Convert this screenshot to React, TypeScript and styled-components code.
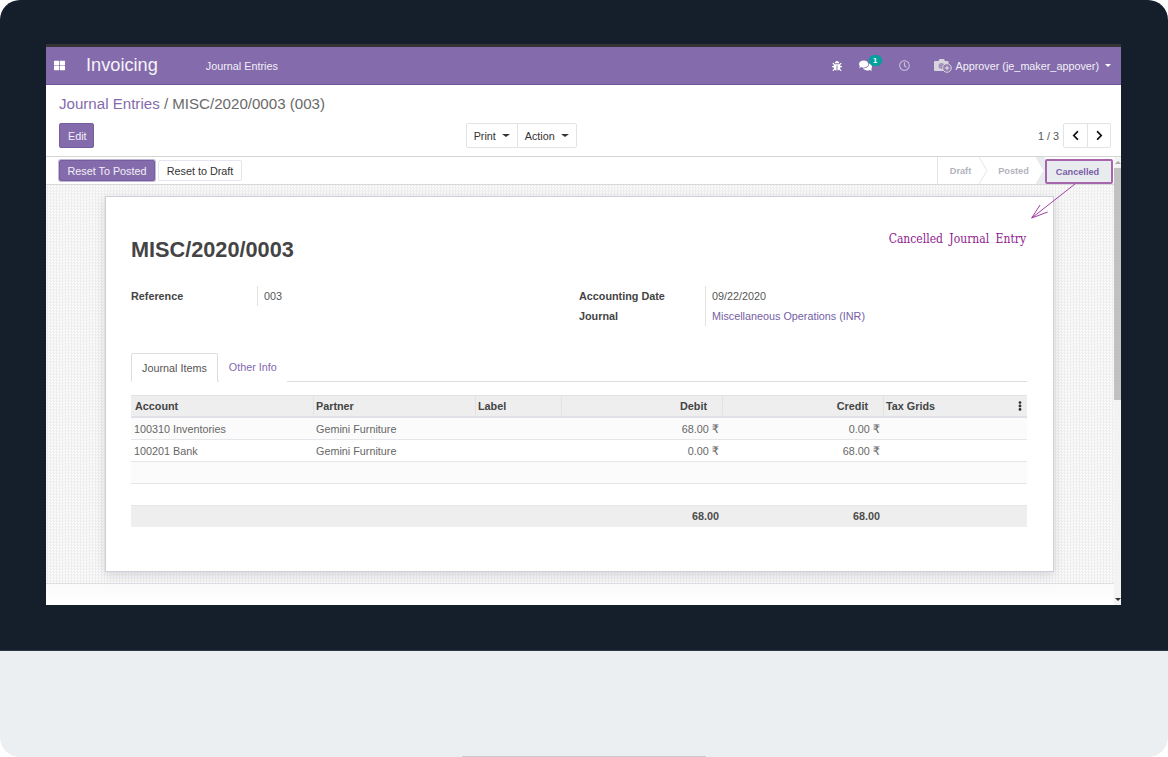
import React from "react";
import styled, { createGlobalStyle } from "styled-components";
import {
  FaBug,
  FaChevronLeft,
  FaChevronRight,
  FaComments,
  FaEllipsisV,
  FaRegClock,
  FaThLarge,
} from "react-icons/fa";

const purple = "#846bab";
const text = "#4c4c4c";

const GlobalStyle = createGlobalStyle`
  html, body { margin: 0; padding: 0; background: #fff; }
  body { font-family: "Liberation Sans", Arial, sans-serif; font-size: 10.8px; color: ${text}; }
  * { box-sizing: border-box; }
`;

const Page = styled.div`
  position: relative;
  width: 1168px;
  height: 757px;
  overflow: hidden;
  border-radius: 20px;
  background: #eceff1;
`;

const Bezel = styled.div`
  height: 651px;
  padding: 44px 47px 0 46px;
  background: #141f2b;
  border-bottom: 1px solid #2a3844;
`;

const Screen = styled.div`
  display: flex;
  flex-direction: column;
  width: 1075px;
  height: 561px;
  background: #fff;
  border-top: 3px solid #343434;
  overflow: hidden;
`;

const NavBar = styled.header`
  flex: none;
  display: flex;
  align-items: center;
  height: 38px;
  padding: 0 22px 0 8px;
  background: ${purple};
  border-bottom: 1px solid #6e559a;
  color: #fff;
`;

const Brand = styled.span`
  margin-left: 21px;
  font-size: 18.2px;
  color: #f6f3fa;
`;

const NavLink = styled.span`
  margin-left: 48px;
  color: #f3eff8;
`;

const NavRight = styled.div`
  display: flex;
  align-items: center;
  margin-left: auto;
  margin-right: -12px;
`;

const NavIcon = styled.span<{ $gap: number; $faded?: boolean }>`
  position: relative;
  display: inline-flex;
  margin-left: ${({ $gap }) => $gap}px;
  color: ${({ $faded }) => ($faded ? "#c9bedb" : "#fff")};
`;

const Badge = styled.span`
  position: absolute;
  top: -4px;
  left: 10px;
  width: 13px;
  height: 11px;
  border-radius: 6px;
  background: #00a09d;
  color: #fff;
  font-size: 7.5px;
  font-weight: 700;
  line-height: 11px;
  text-align: center;
`;

const AvatarIcon = styled.svg`
  margin-left: 24px;
`;

const UserName = styled.span`
  margin-left: 4px;
  color: #f3eff8;
`;

const Caret = styled.span<{ $size?: number }>`
  display: inline-block;
  margin-left: 6px;
  border-top: 3.5px solid currentColor;
  border-left: ${({ $size }) => $size ?? 3.5}px solid transparent;
  border-right: ${({ $size }) => $size ?? 3.5}px solid transparent;
  vertical-align: 2px;
`;

const ControlPanel = styled.section`
  flex: none;
  height: 72px;
  padding: 10px 10px 0 13px;
  border-bottom: 1px solid #d5d5d5;
`;

const Breadcrumb = styled.div`
  height: 18px;
  font-size: 15.1px;
  line-height: 18px;
  color: #6a6a6a;
  white-space: nowrap;
`;

const CrumbLink = styled.span`
  color: ${purple};
`;

const ButtonRow = styled.div`
  display: grid;
  grid-template-columns: 407px 111px 1fr;
  align-items: center;
  margin-top: 10px;
`;

const PrimaryButton = styled.button`
  height: 25px;
  padding: 0 8px;
  border: 1px solid #775ea0;
  border-radius: 2px;
  background: ${purple};
  color: #f3eff8;
  font: 10.8px "Liberation Sans", Arial, sans-serif;
`;

const EditButton = styled(PrimaryButton)`
  justify-self: start;
  width: 35px;
`;

const Group = styled.div`
  display: flex;
  height: 25px;
  border: 1px solid #e3e3e3;
  border-radius: 2px;
  background: #fff;
`;

const GroupItem = styled.span<{ $width: number }>`
  display: flex;
  align-items: center;
  justify-content: center;
  width: ${({ $width }) => $width}px;
  color: #333;
  & + & {
    border-left: 1px solid #e3e3e3;
  }
`;

const Pager = styled.div`
  display: flex;
  align-items: center;
  justify-content: flex-end;
  gap: 4px;
  color: #555;
`;

const Body = styled.div`
  flex: 1;
  display: flex;
  min-height: 0;
`;

const MainColumn = styled.main`
  flex: 1;
  display: flex;
  flex-direction: column;
  min-width: 0;
`;

const StatusBar = styled.div`
  flex: none;
  display: flex;
  align-items: center;
  justify-content: space-between;
  height: 28px;
  padding-left: 13px;
  border-bottom: 1px solid #d8d8d8;
`;

const Actions = styled.div`
  display: flex;
  gap: 3px;
`;

const ResetPosted = styled(PrimaryButton)`
  width: 96px;
  height: 21px;
  padding: 0;
  box-shadow: 0 0 0 1px #c4b8d8;
`;

const ResetDraft = styled.button`
  width: 84px;
  height: 21px;
  padding: 0;
  border: 1px solid #e3e6ee;
  border-radius: 2px;
  background: #fff;
  color: #333;
  font: 10.8px "Liberation Sans", Arial, sans-serif;
`;

const Stages = styled.div`
  display: flex;
  align-self: stretch;
  height: 27px;
  border-left: 1px solid #e5e5e5;
`;

const Stage = styled.span<{ $width: number; $shift?: number; $current?: boolean }>`
  position: relative;
  display: flex;
  align-items: center;
  justify-content: center;
  width: ${({ $width }) => $width}px;
  padding-left: ${({ $shift }) => $shift ?? 0}px;
  color: ${({ $current }) => ($current ? "#7a5ea8" : "#b3b3bd")};
  background: ${({ $current }) => ($current ? "#e9ecef" : "transparent")};
  font-size: 9.2px;
  font-weight: 700;
`;

const StageArrow = styled.svg`
  position: absolute;
  top: 0;
  left: 100%;
  width: 9px;
  height: 27px;
  z-index: 1;
`;

const CurrentStage = styled(Stage)`
  height: 25px;
  margin: 2px 1px 0 9px;
  padding-right: 3px;
  border: 2px solid #a765ad;
  border-radius: 2px;
`;

const SheetBackground = styled.div`
  flex: 1;
  min-height: 0;
  padding: 11px 60px 0 59px;
  background-color: #f3f3f3;
  background-image: repeating-conic-gradient(#eeeeee 0 25%, #fbfbfb 0 50%);
  background-size: 3px 3px;
  border-bottom: 1px solid #dedee3;
`;

const Sheet = styled.article`
  position: relative;
  height: 376px;
  padding: 37px 26px 0 25px;
  background: #fff;
  border: 1px solid #cfcfd8;
  box-shadow: 0 3px 10px rgba(90, 90, 120, 0.2);
`;

const Remark = styled.span`
  position: absolute;
  top: 35px;
  right: 27px;
  color: #8e1a8e;
  font-family: "DejaVu Serif", serif;
  font-stretch: condensed;
  font-size: 12px;
  word-spacing: 3px;
`;

const Title = styled.h1`
  margin: 0;
  height: 31px;
  font-size: 21.7px;
  line-height: 31px;
  font-weight: 700;
  color: #444;
`;

const FieldColumns = styled.div`
  display: grid;
  grid-template-columns: 448px 1fr;
  margin-top: 21px;
`;

const FieldGroup = styled.div`
  display: grid;
  grid-template-columns: 126px 1fr;
  grid-auto-rows: 20px;
`;

const FieldLabel = styled.span`
  font-weight: 700;
  color: #444;
  line-height: 20px;
`;

const FieldValue = styled.span<{ $link?: boolean }>`
  padding-left: 6px;
  border-left: 1px solid #e3e3e3;
  line-height: 20px;
  color: ${({ $link }) => ($link ? "#7460a4" : "#555")};
`;

const Tabs = styled.nav`
  display: flex;
  height: 29px;
  margin-top: 27px;
  border-bottom: 1px solid #ddd;
`;

const Tab = styled.span<{ $active?: boolean }>`
  height: 29px;
  padding: 0 10px;
  line-height: 28px;
  color: ${({ $active }) => ($active ? "#555" : "#8368b2")};
  background: #fff;
  ${({ $active }) =>
    $active
      ? "border: 1px solid #ddd; border-bottom-color: #fff; border-radius: 2px 2px 0 0;"
      : "margin-left: 1px;"}
`;

const Table = styled.div`
  margin-top: 13px;
`;

const COLUMNS = "182px 162px 86px 161px 161px 144px";

const HeadRow = styled.div`
  display: grid;
  grid-template-columns: ${COLUMNS};
  height: 23px;
  padding-bottom: 1px;
  background: #eee;
  border-top: 1px solid #e2e2e2;
  border-bottom: 2px solid #dfe1e6;
`;

const HeadCell = styled.span<{ $right?: boolean }>`
  display: flex;
  align-items: center;
  justify-content: ${({ $right }) => ($right ? "flex-end" : "space-between")};
  padding: 0 ${({ $right }) => ($right ? "15px" : "3px")} 0 2px;
  border-left: 1px solid #e2e2e2;
  font-weight: 700;
  color: #444;
  &:first-child {
    padding-left: 4px;
    border-left: 0;
  }
`;

const MoreIcon = styled(FaEllipsisV)`
  margin-right: -1px;
  font-size: 10px;
  color: #333;
`;

const Row = styled.div<{ $striped?: boolean }>`
  display: grid;
  grid-template-columns: ${COLUMNS};
  height: 22px;
  padding-top: 1px;
  align-items: center;
  background: ${({ $striped }) => ($striped ? "#fbfbfb" : "#fff")};
  border-bottom: 1px solid #e6e6ea;
`;

const Cell = styled.span<{ $right?: boolean }>`
  padding: 0 3px;
  text-align: ${({ $right }) => ($right ? "right" : "left")};
  color: #666;
`;

const Currency = styled.span`
  font-family: "DejaVu Sans", sans-serif;
  font-size: 11.5px;
  line-height: 1;
`;

const FootRow = styled.div`
  display: grid;
  grid-template-columns: ${COLUMNS};
  height: 21px;
  padding-bottom: 1px;
  align-items: center;
  background: #eee;
`;

const FootCell = styled(Cell)`
  font-weight: 700;
  color: #4c4c4c;
`;

const Chatter = styled.div`
  flex: none;
  height: 21px;
  background: linear-gradient(#fafafa, #fff);
`;

const Scrollbar = styled.aside`
  flex: none;
  display: flex;
  flex-direction: column;
  align-items: center;
  width: 7px;
  background: #f3f3f3;
`;

const ScrollArrow = styled.span<{ $down?: boolean }>`
  flex: none;
  width: 0;
  height: 0;
  margin: 4px 0;
  border-left: 3px solid transparent;
  border-right: 3px solid transparent;
  ${({ $down }) =>
    $down ? "border-top: 3px solid #333;" : "border-bottom: 3px solid #a8a8a8;"}
`;

const ScrollThumb = styled.span`
  flex: none;
  align-self: stretch;
  height: 232px;
  background: #c1c1c1;
`;

const ScrollRest = styled.span`
  flex: 1;
`;

const Pointer = styled.svg`
  position: absolute;
  left: 1028px;
  top: 182px;
  width: 52px;
  height: 40px;
  z-index: 2;
`;

const Shelf = styled.div`
  position: absolute;
  left: 462px;
  bottom: 0;
  width: 244px;
  height: 1px;
  background: #c9c9c9;
`;

const Avatar = () => (
  <AvatarIcon width="18" height="15" viewBox="0 0 18 15">
    <path
      d="M1.500 3h3l1-2h4.500l1 2h2.500a1 1 0 0 1 1 1v8a1 1 0 0 1-1 1h-12.500a1 1 0 0 1-1-1v-8a1 1 0 0 1 1-1z"
      fill="#d9d5de"
    />
    <circle cx="7.500" cy="8" r="3" fill="#a492bf" />
    <circle cx="13" cy="10" r="4.300" fill="#8f7bb0" stroke="#d9d5de" />
    <path d="M13 7.800v4.400M10.800 10h4.400" stroke="#e8e4ee" strokeWidth="1" />
  </AvatarIcon>
);

const Chevron = ({ beforeCurrent }: { beforeCurrent?: boolean }) => (
  <StageArrow viewBox="0 0 9 27">
    {beforeCurrent && <path d="M0 0h9v27h-9l8-13.500z" fill="#e9ecef" />}
    <path d="M0 0l8 13.500-8 13.500" fill="#fff" stroke="#e5e5e5" />
  </StageArrow>
);

const Amount = ({ value }: { value: string }) =>
  value ? (
    <>
      {value} <Currency>₹</Currency>
    </>
  ) : null;

const rows = [
  ["100310 Inventories", "Gemini Furniture", "68.00", "0.00"],
  ["100201 Bank", "Gemini Furniture", "0.00", "68.00"],
  ["", "", "", ""],
  ["", "", "", ""],
];

export default function App() {
  return (
    <Page>
      <GlobalStyle />
      <Bezel>
        <Screen>
          <NavBar>
            <FaThLarge size={11} color="#fff" />
            <Brand>Invoicing</Brand>
            <NavLink>Journal Entries</NavLink>
            <NavRight>
              <NavIcon $gap={0}>
                <FaBug size={10} />
              </NavIcon>
              <NavIcon $gap={17}>
                <FaComments size={13} />
                <Badge>1</Badge>
              </NavIcon>
              <NavIcon $gap={27} $faded>
                <FaRegClock size={11} />
              </NavIcon>
              <Avatar />
              <UserName>Approver (je_maker_appover)</UserName>
              <Caret />
            </NavRight>
          </NavBar>
          <ControlPanel>
            <Breadcrumb>
              <CrumbLink>Journal Entries</CrumbLink> / MISC/2020/0003 (003)
            </Breadcrumb>
            <ButtonRow>
              <EditButton>Edit</EditButton>
              <Group>
                <GroupItem $width={50}>
                  Print
                  <Caret $size={4} />
                </GroupItem>
                <GroupItem $width={60}>
                  Action
                  <Caret $size={4} />
                </GroupItem>
              </Group>
              <Pager>
                1 / 3
                <Group>
                  <GroupItem $width={23}>
                    <FaChevronLeft size={11} color="#111" />
                  </GroupItem>
                  <GroupItem $width={23}>
                    <FaChevronRight size={11} color="#111" />
                  </GroupItem>
                </Group>
              </Pager>
            </ButtonRow>
          </ControlPanel>
          <Body>
            <MainColumn>
              <StatusBar>
                <Actions>
                  <ResetPosted>Reset To Posted</ResetPosted>
                  <ResetDraft>Reset to Draft</ResetDraft>
                </Actions>
                <Stages>
                  <Stage $width={41} $shift={4}>
                    Draft
                    <Chevron />
                  </Stage>
                  <Stage $width={57} $shift={12}>
                    Posted
                    <Chevron beforeCurrent />
                  </Stage>
                  <CurrentStage $width={68} $current>
                    Cancelled
                  </CurrentStage>
                </Stages>
              </StatusBar>
              <SheetBackground>
                <Sheet>
                  <Remark>Cancelled Journal Entry</Remark>
                  <Title>MISC/2020/0003</Title>
                  <FieldColumns>
                    <FieldGroup>
                      <FieldLabel>Reference</FieldLabel>
                      <FieldValue>003</FieldValue>
                    </FieldGroup>
                    <FieldGroup>
                      <FieldLabel>Accounting Date</FieldLabel>
                      <FieldValue>09/22/2020</FieldValue>
                      <FieldLabel>Journal</FieldLabel>
                      <FieldValue $link>Miscellaneous Operations (INR)</FieldValue>
                    </FieldGroup>
                  </FieldColumns>
                  <Tabs>
                    <Tab $active>Journal Items</Tab>
                    <Tab>Other Info</Tab>
                  </Tabs>
                  <Table>
                    <HeadRow>
                      <HeadCell>Account</HeadCell>
                      <HeadCell>Partner</HeadCell>
                      <HeadCell>Label</HeadCell>
                      <HeadCell $right>Debit</HeadCell>
                      <HeadCell $right>Credit</HeadCell>
                      <HeadCell>
                        Tax Grids
                        <MoreIcon />
                      </HeadCell>
                    </HeadRow>
                    {rows.map((row, i) => (
                      <Row key={i} $striped={i % 2 === 0}>
                        <Cell>{row[0]}</Cell>
                        <Cell>{row[1]}</Cell>
                        <Cell />
                        <Cell $right>
                          <Amount value={row[2]} />
                        </Cell>
                        <Cell $right>
                          <Amount value={row[3]} />
                        </Cell>
                        <Cell />
                      </Row>
                    ))}
                    <FootRow>
                      <FootCell />
                      <FootCell />
                      <FootCell />
                      <FootCell $right>68.00</FootCell>
                      <FootCell $right>68.00</FootCell>
                      <FootCell />
                    </FootRow>
                  </Table>
                </Sheet>
              </SheetBackground>
              <Chatter />
            </MainColumn>
            <Scrollbar>
              <ScrollArrow />
              <ScrollThumb />
              <ScrollRest />
              <ScrollArrow $down />
            </Scrollbar>
          </Body>
        </Screen>
      </Bezel>
      <Pointer viewBox="0 0 52 40">
        <path
          d="M47 2L3.700 36M12 23L3.700 36L19.700 30"
          fill="none"
          stroke="#a33fa3"
          strokeWidth="1"
        />
      </Pointer>
      <Shelf />
    </Page>
  );
}
